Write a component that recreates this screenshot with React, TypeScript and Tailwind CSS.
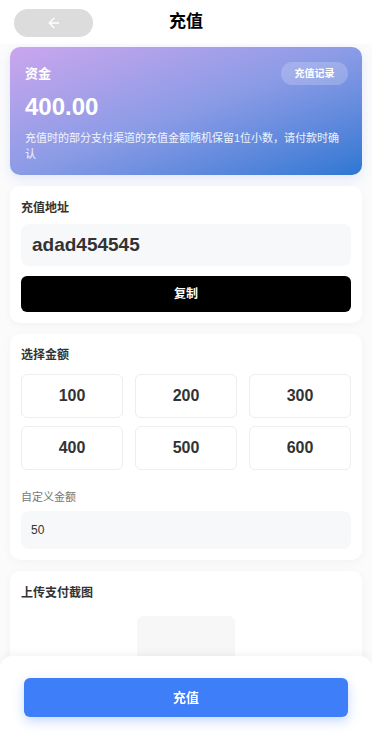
import { useState } from "react";

const amounts = [100, 200, 300, 400, 500, 600];

export default function App() {
  const [custom, setCustom] = useState("50");

  return (
    <div
      className="min-h-screen bg-[#fbfbfc] text-[#333]"
      style={{ fontFamily: '"Liberation Sans", "Noto Sans CJK SC", sans-serif' }}
    >
      <header className="h-[44px] relative flex items-center justify-center bg-white">
        <button className="absolute left-[14px] top-[9px] w-[79px] h-[28px] rounded-full bg-[#dcdcdc] flex items-center justify-center">
          <svg width="16" height="16" viewBox="0 0 24 24" fill="none" stroke="white" strokeWidth="2" strokeLinecap="round" strokeLinejoin="round">
            <path d="M19 12H5" />
            <path d="M12 19l-7-7 7-7" />
          </svg>
        </button>
        <h1 className="text-[17px] font-bold text-black">充值</h1>
      </header>

      <main className="px-[10px] pt-[3px] pb-[100px] flex flex-col gap-[11px]">
        <section className="rounded-[10px] bg-gradient-to-br from-[#caa6ee] via-[#8b9be6] to-[#2b77d3] px-[15px] pt-[15px] pb-[13px] text-white shadow-[0_4px_12px_rgba(80,120,220,0.15)]">
          <div className="h-[23px] flex items-center justify-between">
            <span className="text-[13px] font-bold">资金</span>
            <span className="h-[23px] w-[67px] mr-[-1px] rounded-full bg-white/20 flex items-center justify-center text-[10px] font-bold">
              充值记录
            </span>
          </div>
          <div className="mt-[6px] text-[24px] leading-[32px] font-bold">400.00</div>
          <p className="mt-[7px] text-[11px] leading-[16px] text-white/90">
            充值时的部分支付渠道的充值金额随机保留1位小数，请付款时确认
          </p>
        </section>

        <section className="rounded-[10px] bg-white px-[11px] pt-[13px] pb-[11px] shadow-[0_2px_10px_rgba(0,0,0,0.04)]">
          <h2 className="text-[12px] leading-[18px] font-bold text-[#333]">充值地址</h2>
          <div className="mt-[7px] h-[42px] rounded-[8px] bg-[#f7f8fa] flex items-center px-[11px] text-[19px] font-semibold text-[#333]">
            adad454545
          </div>
          <button className="mt-[10px] w-full h-[36px] rounded-[6px] bg-black text-white text-[12px] font-bold">
            复制
          </button>
        </section>

        <section className="rounded-[10px] bg-white px-[11px] pt-[12px] pb-[11px] shadow-[0_2px_10px_rgba(0,0,0,0.04)]">
          <h2 className="text-[12px] leading-[18px] font-bold text-[#333]">选择金额</h2>
          <div className="mt-[10px] grid grid-cols-3 gap-x-[12px] gap-y-[8px]">
            {amounts.map((a) => (
              <button
                key={a}
                className="h-[44px] rounded-[6px] border border-[#eeeeee] bg-white text-[16px] font-bold text-[#333]"
              >
                {a}
              </button>
            ))}
          </div>
          <div className="mt-[19px] text-[11px] leading-[16px] text-[#777]">自定义金额</div>
          <input
            value={custom}
            onChange={(e) => setCustom(e.target.value)}
            className="mt-[6px] w-full h-[38px] rounded-[8px] bg-[#f7f8fa] px-[10px] text-[12px] text-[#333] outline-none"
          />
        </section>

        <section className="rounded-[10px] bg-white px-[11px] pt-[13px] pb-[14px] shadow-[0_2px_10px_rgba(0,0,0,0.04)]">
          <h2 className="text-[12px] leading-[18px] font-bold text-[#333]">上传支付截图</h2>
          <div className="mt-[14px] flex justify-center">
            <div className="w-[98px] h-[98px] rounded-[6px] bg-[#f7f7f7] flex items-center justify-center text-[#999] text-[20px]">
              +
            </div>
          </div>
        </section>
      </main>

      <div className="fixed bottom-0 left-0 right-0 h-[80px] bg-white rounded-t-[12px] shadow-[0_-2px_10px_rgba(0,0,0,0.05)] px-[24px] pt-[22px]">
        <button className="w-full h-[39px] rounded-[6px] bg-[#3e7ff9] text-white text-[13px] font-bold shadow-[0_4px_12px_rgba(62,127,249,0.3)]">
          充值
        </button>
      </div>
    </div>
  );
}
